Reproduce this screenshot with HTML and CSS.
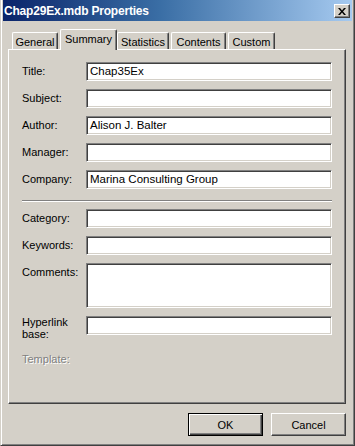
FILE: index.html
```html
<!DOCTYPE html>
<html>
<head>
<meta charset="utf-8">
<title>Chap29Ex.mdb Properties</title>
<link rel="stylesheet" href="styles.css">
</head>
<body>
<div class="window">
  <div class="titlebar">
    <span class="title">Chap29Ex.mdb Properties</span>
    <span class="close">
      <svg width="8" height="7" viewBox="0 0 8 7"><path d="M0 0h2l2 2.5L6 0h2L5 3.5 8 7H6L4 4.5 2 7H0l3-3.5z" fill="#000"/></svg>
    </span>
  </div>
  <div class="body">
    <div class="tabs">
      <div class="tab t-general">General</div>
      <div class="tab tab-active t-summary">Summary</div>
      <div class="tab t-stats">Statistics</div>
      <div class="tab t-contents">Contents</div>
      <div class="tab t-custom">Custom</div>
    </div>
    <div class="panel">
      <div class="group">
        <label class="lbl">Title:</label><div class="field">Chap35Ex</div>
        <label class="lbl">Subject:</label><div class="field"></div>
        <label class="lbl">Author:</label><div class="field">Alison J. Balter</div>
        <label class="lbl">Manager:</label><div class="field"></div>
        <label class="lbl">Company:</label><div class="field">Marina Consulting Group</div>
      </div>
      <div class="sep"></div>
      <div class="group group2">
        <label class="lbl">Category:</label><div class="field"></div>
        <label class="lbl">Keywords:</label><div class="field"></div>
        <label class="lbl lbl-top">Comments:</label><div class="field field-tall"></div>
        <label class="lbl lbl-two">Hyperlink<br>base:</label><div class="field"></div>
      </div>
      <div class="disabled">Template:</div>
    </div>
    <div class="buttons">
      <div class="btn btn-default">OK</div>
      <div class="btn">Cancel</div>
    </div>
  </div>
</div>
</body>
</html>
```

FILE: styles.css
```css
html, body {
  margin: 0;
  padding: 0;
  background: #d4d0c8;
}
body {
  font-family: "Liberation Sans", Arial, sans-serif;
  font-size: 11px;
  color: #000;
}
.window {
  width: 355px;
  height: 446px;
  box-sizing: border-box;
  background: #d4d0c8;
  border-style: solid;
  border-width: 0 1px 1px 1px;
  border-color: #d4d0c8 #404040 #404040 #d4d0c8;
  box-shadow: inset 1px 0 #fff, inset -1px -1px #808080;
  padding: 0 2px 2px 2px;
  display: flex;
  flex-direction: column;
}
.titlebar {
  height: 21px;
  flex: none;
  background: linear-gradient(to right, #0a246a 0%, #3a6ea5 45%, #a6caf0 100%);
  display: flex;
  align-items: center;
  justify-content: space-between;
  padding: 0 2px 0 1px;
}
.title {
  color: #fff;
  font-weight: bold;
  font-size: 12px;
  letter-spacing: -0.2px;
  white-space: nowrap;
}
.close {
  width: 16px;
  height: 14px;
  box-sizing: border-box;
  background: #d4d0c8;
  border: 1px solid;
  border-color: #fff #404040 #404040 #fff;
  box-shadow: inset -1px -1px #808080;
  display: flex;
  align-items: center;
  justify-content: center;
  margin-top: 1px;
}
.close svg { display: block; }
.body {
  flex: 1;
  padding: 0 6px 0 5px;
  display: flex;
  flex-direction: column;
}
.tabs {
  margin-top: 8px;
  height: 20px;
  display: flex;
  align-items: flex-end;
  position: relative;
  z-index: 1;
}
.tab {
  height: 17px;
  box-sizing: border-box;
  border-top: 1px solid #fff;
  border-left: 1px solid #fff;
  border-right: 1px solid #404040;
  box-shadow: inset -1px 0 #808080;
  border-radius: 2px 2px 0 0;
  display: flex;
  align-items: center;
  justify-content: center;
  white-space: nowrap;
  padding-top: 1px;
  background: #d4d0c8;
}
.tab-active {
  height: 21px;
  margin-bottom: -1px;
  padding-top: 0;
  padding-bottom: 2px;
}
.t-general { width: 46px; margin-left: 4px; }
.t-summary { width: 57px; margin-left: 2px; }
.t-stats { width: 52px; margin-left: 0; }
.t-contents { width: 55px; margin-left: 2px; }
.t-custom { width: 47px; margin-left: 2px; }
.panel {
  height: 355px;
  box-sizing: border-box;
  border: 1px solid;
  border-color: #fff #404040 #404040 #fff;
  box-shadow: inset -1px -1px #808080;
  padding: 12px 13px 0 13px;
  display: flex;
  flex-direction: column;
}
.group {
  display: grid;
  grid-template-columns: 64px 1fr;
  row-gap: 8px;
}
.group2 { margin-top: 7px; }
.lbl {
  align-self: center;
  line-height: 13px;
  white-space: nowrap;
}
.lbl-top {
  align-self: start;
  padding-top: 3px;
}
.lbl-two {
  align-self: start;
  line-height: 12px;
}
.field {
  height: 19px;
  box-sizing: border-box;
  background: #fff;
  border: 1px solid;
  border-color: #808080 #fff #fff #808080;
  box-shadow: inset 1px 1px #404040, inset -1px -1px #d4d0c8;
  padding: 0 3px;
  line-height: 17px;
  font-size: 11.5px;
  white-space: nowrap;
  overflow: hidden;
}
.field-tall { height: 45px; }
.sep {
  margin-top: 11px;
  border-top: 1px solid #808080;
  border-bottom: 1px solid #fff;
  height: 0;
}
.disabled {
  margin-top: 13px;
  line-height: 13px;
  color: #808080;
  text-shadow: 1px 1px #fff;
}
.buttons {
  margin-top: 9px;
  display: flex;
  justify-content: flex-end;
  gap: 8px;
}
.btn {
  width: 75px;
  height: 23px;
  box-sizing: border-box;
  border: 1px solid;
  border-color: #fff #404040 #404040 #fff;
  box-shadow: inset -1px -1px #808080;
  display: flex;
  align-items: center;
  justify-content: center;
}
.btn-default {
  border-color: #000;
  box-shadow: inset 1px 1px #fff, inset -1px -1px #404040, inset -2px -2px #808080;
}
```
